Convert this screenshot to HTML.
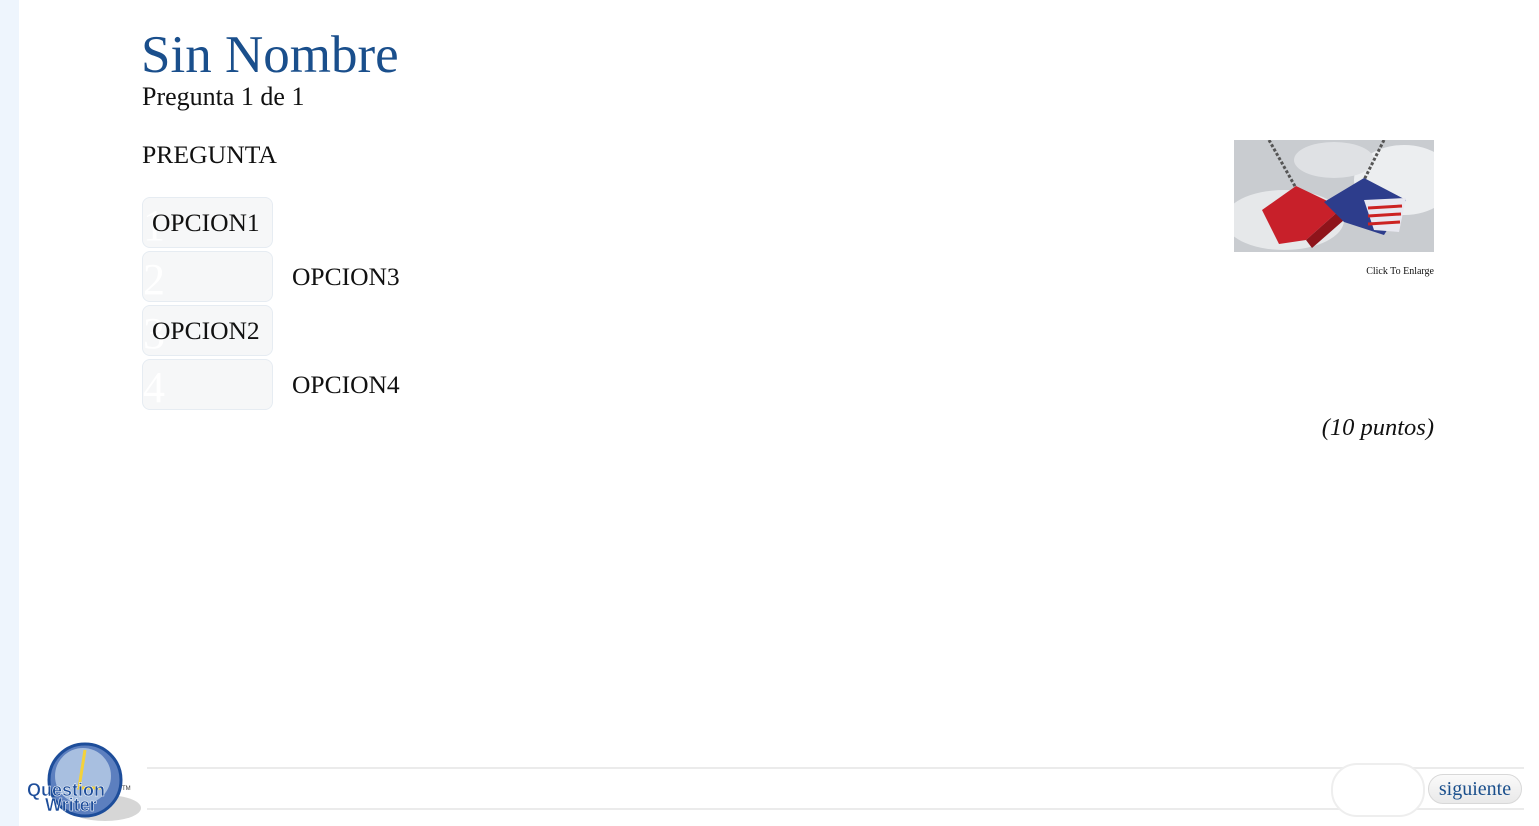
<!DOCTYPE html>
<html><head><meta charset="utf-8"><style>
body{margin:0;width:1539px;height:826px;background:#fff;position:relative;overflow:hidden;font-family:"Liberation Serif",serif}
.strip{position:absolute;left:0;top:0;width:19px;height:826px;background:#eef5fd}
.abs{position:absolute;white-space:nowrap}
.box{position:absolute;left:142px;width:129px;height:49px;border:1px solid #e6ecf2;border-radius:8px;background:#f6f7f8}
.num{position:absolute;left:0;top:6px;font-size:44px;color:#fff;line-height:1}
.lbl{position:absolute;left:9px;top:10px;font-size:25.5px;color:#111}
.line{position:absolute;left:147px;width:1377px;height:2px;background:#ebebeb}
</style></head><body>
<div class="strip"></div>
<div class="abs" style="left:141px;top:25px;font-size:53px;color:#1a4f8c">Sin Nombre</div>
<div class="abs" style="left:142px;top:82px;font-size:26px;color:#111">Pregunta 1 de 1</div>
<div class="abs" style="left:142px;top:140px;font-size:25.7px;color:#111">PREGUNTA</div>
<div class="box" style="top:197px"><span class="num">1</span><span class="lbl">OPCION1</span></div>
<div class="box" style="top:251px"><span class="num">2</span></div>
<div class="box" style="top:305px"><span class="num">3</span><span class="lbl">OPCION2</span></div>
<div class="box" style="top:359px"><span class="num">4</span></div>
<div class="abs" style="left:292px;top:262px;font-size:25.5px;color:#111">OPCION3</div>
<div class="abs" style="left:292px;top:370px;font-size:25.5px;color:#111">OPCION4</div>
<svg class="abs" style="left:1234px;top:140px" width="200" height="112" viewBox="0 0 200 112">
<rect width="200" height="112" fill="#c9ccd0"/>
<ellipse cx="50" cy="80" rx="60" ry="30" fill="#e6e8ea"/><ellipse cx="170" cy="40" rx="50" ry="35" fill="#eceef0"/><ellipse cx="100" cy="20" rx="40" ry="18" fill="#dfe1e4"/>
<line x1="35" y1="0" x2="62" y2="48" stroke="#555" stroke-width="3" stroke-dasharray="3 2"/>
<line x1="150" y1="0" x2="130" y2="40" stroke="#555" stroke-width="3" stroke-dasharray="3 2"/>
<polygon points="28,70 62,46 108,68 72,100 45,104" fill="#c8202a"/>
<polygon points="72,100 108,68 110,80 78,108" fill="#8e141b"/>
<polygon points="90,62 130,38 172,60 150,95 110,82" fill="#2d3d8c"/>
<polygon points="130,60 172,58 165,92 140,90" fill="#e8e8f0"/>
<line x1="134" y1="68" x2="168" y2="66" stroke="#c22" stroke-width="3"/><line x1="134" y1="76" x2="167" y2="74" stroke="#c22" stroke-width="3"/><line x1="134" y1="84" x2="166" y2="82" stroke="#c22" stroke-width="3"/>
</svg>
<div class="abs" style="right:105px;top:266px;font-size:10px;color:#111">Click To Enlarge</div>
<div class="abs" style="right:105px;top:414px;font-size:24.5px;font-style:italic;color:#111">(10 puntos)</div>
<div class="line" style="top:767px"></div>
<div class="line" style="top:808px"></div>
<div class="abs" style="left:1331px;top:763px;width:90px;height:50px;border:2px solid #eee;border-radius:26px;background:#fff"></div>
<div class="abs" style="left:1428px;top:774px;width:92px;height:28px;border:1px solid #d8d8d8;border-radius:15px;background:linear-gradient(#fafafa,#e9e9e9);font-size:20px;color:#1a4f8c;text-align:center;line-height:28px">siguiente</div>
<svg class="abs" style="left:25px;top:740px" width="120" height="84" viewBox="0 0 120 84">
<ellipse cx="80" cy="68" rx="36" ry="13" fill="#d6d6d6"/>
<circle cx="60" cy="40" r="36" fill="#5c7fbf" stroke="#1d4d9a" stroke-width="3"/>
<circle cx="58" cy="36" r="28" fill="#a8bfe0"/>
<path d="M60 10 L54 48 L78 48" stroke="#f4d23a" stroke-width="3" fill="none"/>
<text x="2" y="56" font-family="Liberation Sans" font-weight="bold" font-size="18" fill="#1d4d9a" stroke="#fff" stroke-width="0.5">Question</text>
<text x="20" y="71" font-family="Liberation Sans" font-weight="bold" font-size="18" fill="#1d4d9a" stroke="#fff" stroke-width="0.5">Writer</text>
<text x="97" y="50" font-family="Liberation Sans" font-size="6" fill="#333">TM</text>
</svg>
</body></html>
